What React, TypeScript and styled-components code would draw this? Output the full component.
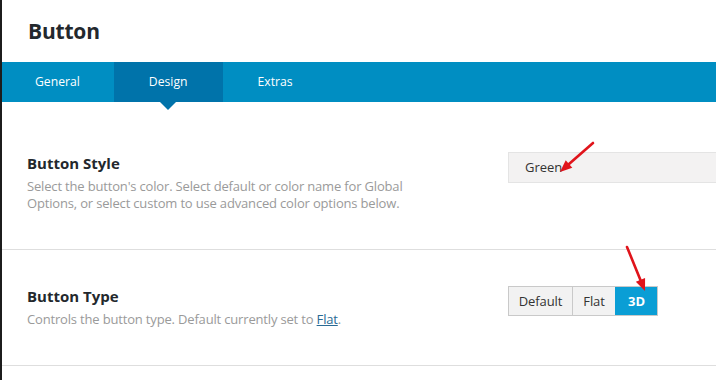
import styled, { createGlobalStyle } from "styled-components";

const GlobalStyle = createGlobalStyle`
  html, body {
    margin: 0;
    padding: 0;
    background: #fff;
    overflow: hidden;
  }
  body {
    font-family: "Open Sans", "Noto Sans", sans-serif;
    color: #23282d;
  }
`;

const Page = styled.div`
  position: relative;
  width: 716px;
  height: 380px;
  box-sizing: border-box;
  border-left: 2px solid #1c1c1c;
  overflow: hidden;
`;

const Header = styled.header`
  height: 62px;
  box-sizing: border-box;
  padding: 17px 0 0 26px;
`;

const Title = styled.h1`
  margin: 0;
  font-size: 21px;
  line-height: 28px;
  font-weight: 700;
  letter-spacing: -0.2px;
  color: #23282d;
`;

const TabBar = styled.nav`
  display: flex;
  height: 40px;
  background: #008ec2;
`;

const Tab = styled.div<{ $active?: boolean }>`
  position: relative;
  padding: 0 35px;
  line-height: 40px;
  font-size: 12.2px;
  color: #fff;
  background: ${({ $active }) => ($active ? "#0073aa" : "transparent")};

  &:first-child {
    padding: 0 34px 0 33px;
  }

  &::after {
    content: "";
    display: ${({ $active }) => ($active ? "block" : "none")};
    position: absolute;
    left: 50%;
    bottom: -8px;
    margin-left: -8px;
    border-left: 8px solid transparent;
    border-right: 8px solid transparent;
    border-top: 8px solid #0073aa;
  }
`;

const Panel = styled.div`
  padding-top: 15px;
`;

const Section = styled.section`
  display: flex;
  align-items: flex-start;
  padding: 36px 0 37px 25px;
  border-bottom: 1px solid #dedede;
`;

const Info = styled.div`
  flex: 0 0 481px;
`;

const Heading = styled.h3`
  margin: 0 0 5px;
  font-size: 15px;
  line-height: 20px;
  font-weight: 700;
  color: #23282d;
`;

const Description = styled.p`
  margin: 0;
  max-width: 390px;
  font-size: 13px;
  line-height: 17px;
  letter-spacing: -0.17px;
  color: #9a9a9a;
`;

const Link = styled.a`
  color: #2a6a94;
  text-decoration: underline;
`;

const Select = styled.div`
  flex: 0 0 300px;
  height: 31px;
  box-sizing: border-box;
  padding-left: 16px;
  margin-top: -1px;
  line-height: 29px;
  font-size: 13px;
  color: #333;
  background: #f3f2f2;
  border: 1px solid #e4e4e4;
`;

const ButtonGroup = styled.div`
  display: flex;
  height: 30px;
  box-sizing: border-box;
  border: 1px solid #c9c9c9;
`;

const Option = styled.div<{ $active?: boolean; $w: number }>`
  width: ${({ $w }) => $w}px;
  text-align: center;
  line-height: 28px;
  font-size: 13px;
  letter-spacing: -0.1px;
  font-weight: ${({ $active }) => ($active ? 700 : 400)};
  color: ${({ $active }) => ($active ? "#fff" : "#333")};
  background: ${({ $active }) => ($active ? "#0a9ed5" : "#f2f2f2")};
  border-left: 1px solid ${({ $active }) => ($active ? "#0a9ed5" : "#c9c9c9")};

  &:first-child {
    border-left: none;
  }
`;

const Annotations = styled.svg`
  position: absolute;
  left: -2px;
  top: 0;
  pointer-events: none;
`;

function Arrow({ x1, y1, x2, y2 }: { x1: number; y1: number; x2: number; y2: number }) {
  const a = Math.atan2(y2 - y1, x2 - x1);
  const len = 12;
  const half = 5;
  const bx = x2 - Math.cos(a) * len;
  const by = y2 - Math.sin(a) * len;
  const px = -Math.sin(a) * half;
  const py = Math.cos(a) * half;
  return (
    <g>
      <line x1={x1} y1={y1} x2={bx} y2={by} stroke="#e0141b" strokeWidth={2.6} strokeLinecap="round" />
      <polygon points={`${x2},${y2} ${bx + px},${by + py} ${bx - px},${by - py}`} fill="#e0141b" />
    </g>
  );
}

export default function App() {
  return (
    <>
      <GlobalStyle />
      <Page>
        <Header>
          <Title>Button</Title>
        </Header>
        <TabBar>
          <Tab>General</Tab>
          <Tab $active>Design</Tab>
          <Tab>Extras</Tab>
        </TabBar>
        <Panel>
          <Section>
            <Info>
              <Heading>Button Style</Heading>
              <Description>
                Select the button's color. Select default or color name for Global Options, or select custom to use
                advanced color options below.
              </Description>
            </Info>
            <Select>Green</Select>
          </Section>
          <Section>
            <Info>
              <Heading>Button Type</Heading>
              <Description>
                Controls the button type. Default currently set to <Link href="#">Flat</Link>.
              </Description>
            </Info>
            <ButtonGroup>
              <Option $w={63}>Default</Option>
              <Option $w={42}>Flat</Option>
              <Option $w={41} $active>
                3D
              </Option>
            </ButtonGroup>
          </Section>
        </Panel>
        <Annotations width={716} height={380}>
          <Arrow x1={593} y1={143} x2={560} y2={172} />
          <Arrow x1={627} y1={247} x2={645} y2={291} />
        </Annotations>
      </Page>
    </>
  );
}
